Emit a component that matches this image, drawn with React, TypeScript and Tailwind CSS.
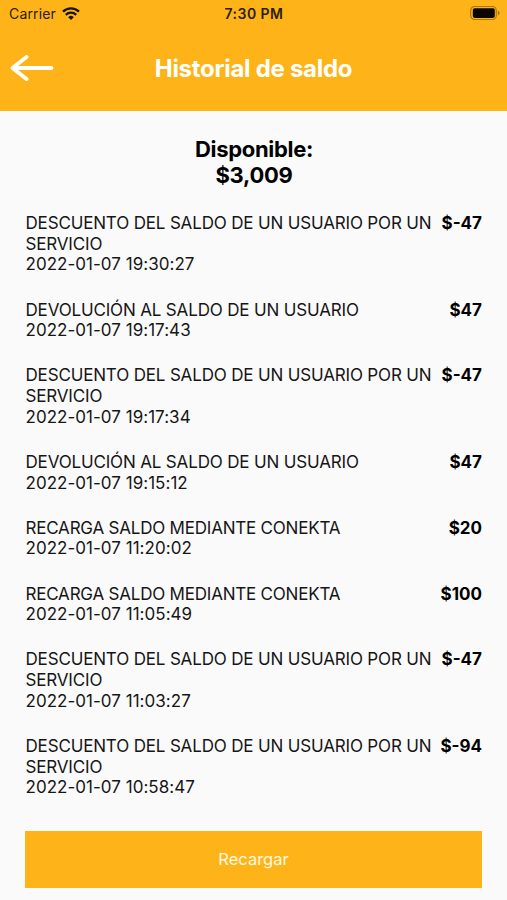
type Movement = {
  lines: string[];
  date: string;
  amount: string;
};

const discount = ["DESCUENTO DEL SALDO DE UN USUARIO POR UN", "SERVICIO"];
const refund = ["DEVOLUCIÓN AL SALDO DE UN USUARIO"];
const topUp = ["RECARGA SALDO MEDIANTE CONEKTA"];

const movements: Movement[] = [
  { lines: discount, date: "2022-01-07 19:30:27", amount: "$-47" },
  { lines: refund, date: "2022-01-07 19:17:43", amount: "$47" },
  { lines: discount, date: "2022-01-07 19:17:34", amount: "$-47" },
  { lines: refund, date: "2022-01-07 19:15:12", amount: "$47" },
  { lines: topUp, date: "2022-01-07 11:20:02", amount: "$20" },
  { lines: topUp, date: "2022-01-07 11:05:49", amount: "$100" },
  { lines: discount, date: "2022-01-07 11:03:27", amount: "$-47" },
  { lines: discount, date: "2022-01-07 10:58:47", amount: "$-94" },
];

const StatusBar = () => {
  return (
    <div className="grid h-[26px] grid-cols-3 items-center pr-[6px] pl-[9px] text-[14px] text-[#2b2008]">
      <div className="flex items-center gap-[6px]">
        <span className="tracking-[0.15px]">Carrier</span>
        <svg width="18" height="13" viewBox="0 0 18 13" fill="none">
          <path d="M1 4.6a11.6 11.6 0 0 1 16 0" stroke="#1c1403" strokeWidth="2.4" />
          <path d="M3.8 7.8a7.5 7.5 0 0 1 10.4 0" stroke="#1c1403" strokeWidth="2.3" />
          <path d="M9 13 6.2 10.2a4 4 0 0 1 5.6 0Z" fill="#1c1403" />
        </svg>
      </div>
      <span className="pr-[2px] text-center font-semibold tracking-[0.45px]">7:30 PM</span>
      <svg className="justify-self-end" width="31" height="14" viewBox="0 0 31 14">
        <rect x="0.7" y="0.5" width="25.6" height="13" rx="4" fill="none" stroke="#a8770f" strokeWidth="1.2" />
        <rect x="2.8" y="2.3" width="22" height="9.6" rx="1.8" fill="#0a0700" />
        <path d="M27.8 4.5c2.4 1 2.4 4 0 5Z" fill="#a8770f" />
      </svg>
    </div>
  );
};

const App = () => {
  return (
    <div className="flex h-[900px] w-[507px] flex-col overflow-hidden bg-[#fafafa] font-[Inter,sans-serif] text-[#161616]">
      <header className="h-[111px] bg-[#feb419]">
        <StatusBar />
        <div className="grid h-[84px] grid-cols-[60px_1fr_60px] items-center">
          <button className="pl-[10px]">
            <svg
              width="44"
              height="28"
              viewBox="0 0 44 28"
              fill="none"
              stroke="#fff"
              strokeWidth="3.8"
              strokeLinecap="round"
              strokeLinejoin="round"
            >
              <path d="M41.5 14H2.5M16.5 3 2.5 14l14 11" />
            </svg>
          </button>
          <h1 className="pt-[2px] text-center text-[24px] font-bold tracking-[-0.28px] text-white">
            Historial de saldo
          </h1>
        </div>
      </header>
      <h2 className="pt-[25px] pl-px text-center text-[22px] leading-[26.4px] font-bold tracking-[-0.3px] text-black">
        Disponible:
        <br />
        $3,009
      </h2>
      <ul className="flex flex-col gap-[24.45px] pt-[24.2px] pr-[25px] pl-[25.5px] text-[17px] leading-[20.7px]">
        {movements.map((m, i) => (
          <li key={i} className="flex justify-between">
            <div className="whitespace-nowrap">
              {m.lines.map((line) => (
                <p key={line} className={m.lines === topUp ? "tracking-[-0.21px]" : "tracking-[-0.16px]"}>
                  {line}
                </p>
              ))}
              <p className="tracking-[0.03px]">{m.date}</p>
            </div>
            <span className="font-bold text-black">{m.amount}</span>
          </li>
        ))}
      </ul>
      <button className="mx-[25px] mt-[32.4px] h-[57px] shrink-0 bg-[#feb419] text-[16.5px] text-[#fff8e2]">
        Recargar
      </button>
    </div>
  );
};

export default App;
